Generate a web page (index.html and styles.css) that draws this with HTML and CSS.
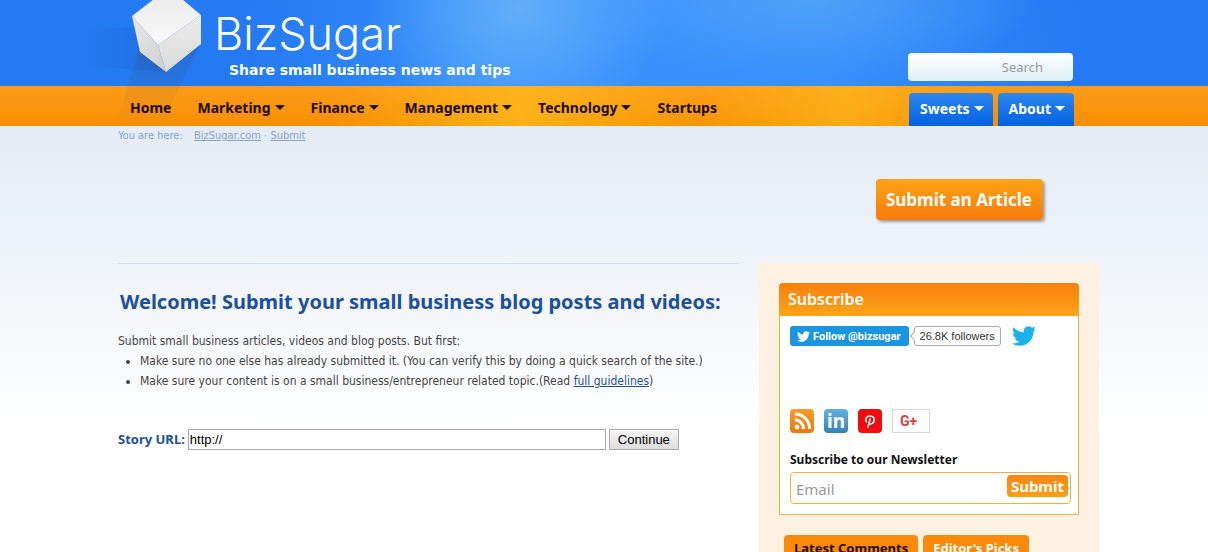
FILE: index.html
```
<!DOCTYPE html>
<html lang="en">
<head>
    <meta charset="UTF-8">
    <meta name="viewport" content="width=device-width, initial-scale=1.0">
    <title>BizSugar - Submit</title>
    <link rel="stylesheet" href="styles.css">
</head>
<body>
    <svg width="0" height="0" class="defs" aria-hidden="true">
        <symbol id="bird" viewBox="0 0 24 24">
            <path fill="currentColor" d="M23.953 4.57a10 10 0 01-2.825.775 4.958 4.958 0 002.163-2.723c-.951.555-2.005.959-3.127 1.184a4.92 4.92 0 00-8.384 4.482C7.69 8.095 4.067 6.13 1.64 3.162a4.822 4.822 0 00-.666 2.475c0 1.71.87 3.213 2.188 4.096a4.904 4.904 0 01-2.228-.616v.06a4.923 4.923 0 003.946 4.827 4.996 4.996 0 01-2.212.085 4.936 4.936 0 004.604 3.417 9.867 9.867 0 01-6.102 2.105c-.39 0-.779-.023-1.17-.067a13.995 13.995 0 007.557 2.209c9.053 0 13.998-7.496 13.998-13.985 0-.21 0-.42-.015-.63A9.935 9.935 0 0024 4.59z"/>
        </symbol>
    </svg>

    <header class="header">
        <div class="masthead">
            <div class="container masthead-inner">
                <svg class="cube" width="130" height="126" viewBox="85 0 130 126" aria-hidden="true">
                    <defs>
                        <linearGradient id="shade" x1="0" x2="1"><stop offset="0" stop-color="#1a5cc4" stop-opacity="0"/><stop offset="1" stop-color="#1a5cc4" stop-opacity=".4"/></linearGradient>
                        <linearGradient id="drop" x1="0" x2="0" y1="0" y2="1"><stop offset="0" stop-color="#333" stop-opacity=".2"/><stop offset="1" stop-color="#555" stop-opacity="0"/></linearGradient>
                        <linearGradient id="top" x1="0" x2="0" y1="1" y2="0"><stop offset="0" stop-color="#fafafa"/><stop offset="1" stop-color="#ececec"/></linearGradient>
                        <linearGradient id="left" x1="0" x2="1" y1="0" y2="1"><stop offset="0" stop-color="#e9e9e9"/><stop offset="1" stop-color="#cecece"/></linearGradient>
                        <linearGradient id="right" x1="0" x2="0" y1="0" y2="1"><stop offset="0" stop-color="#ececec"/><stop offset="1" stop-color="#dadada"/></linearGradient>
                    </defs>
                    <path fill="url(#shade)" d="M85 30l50-3 31 45-81-6z"/>
                    <path fill="url(#drop)" d="M140 46l61-4-29 60-4 22h-52z"/>
                    <path fill="url(#top)" d="M132 16l22-17h28l19 16-43 30z"/>
                    <path fill="url(#left)" d="M132 16l26 29 8 27-26-20z"/>
                    <path fill="url(#right)" d="M158 45l43-30v29l-35 28z"/>
                </svg>
                <div class="brand">
                    <a class="logo" href="#">BizSugar</a>
                    <p class="tagline">Share small business news and tips</p>
                </div>
                <form class="search">
                    <input type="text" class="search-input" placeholder="Search" aria-label="Search">
                </form>
            </div>
        </div>
        <nav class="navbar">
            <div class="container navbar-inner">
                <ul class="menu">
                    <li><a href="#">Home</a></li>
                    <li><a href="#" class="drop">Marketing</a></li>
                    <li><a href="#" class="drop">Finance</a></li>
                    <li><a href="#" class="drop">Management</a></li>
                    <li><a href="#" class="drop">Technology</a></li>
                    <li><a href="#">Startups</a></li>
                </ul>
                <ul class="menu-tabs">
                    <li><a href="#" class="drop">Sweets</a></li>
                    <li><a href="#" class="drop">About</a></li>
                </ul>
            </div>
        </nav>
    </header>

    <div class="container">
        <div class="breadcrumb">
            <span class="here">You are here:</span>
            <a href="#">BizSugar.com</a> &middot; <a href="#">Submit</a>
        </div>

        <div class="banner">
            <a class="submit-article" href="#">Submit an Article</a>
        </div>

        <div class="columns">
            <main class="content">
                <h1>Welcome! Submit your small business blog posts and videos:</h1>
                <p>Submit small business articles, videos and blog posts. But first:</p>
                <ul class="rules">
                    <li>Make sure no one else has already submitted it. (You can verify this by doing a quick search of the site.)</li>
                    <li>Make sure your content is on a small business/entrepreneur related topic.(Read <a href="#">full guidelines</a>)</li>
                </ul>
                <form class="story-form">
                    <label for="story-url">Story URL:</label>
                    <input type="text" id="story-url" value="http://">
                    <button type="submit">Continue</button>
                </form>
            </main>

            <aside class="sidebar">
                <section class="box">
                    <h2>Subscribe</h2>
                    <div class="box-body">
                        <div class="twitter">
                            <a class="follow" href="#"><svg width="13" height="13"><use href="#bird"/></svg>Follow @bizsugar</a>
                            <a class="count" href="#">26.8K followers</a>
                            <a class="bird" href="#" aria-label="Twitter"><svg width="24" height="24"><use href="#bird"/></svg></a>
                        </div>
                        <div class="social">
                            <a href="#" class="icon rss" aria-label="RSS">
                                <svg width="24" height="24" viewBox="0 0 24 24" fill="none" stroke="#fff" stroke-width="3"><circle cx="7" cy="18" r="2.4" fill="#fff" stroke="none"/><path d="M5 11a8.500 8.500 0 0 1 8.500 9M5 5a14.500 14.500 0 0 1 14.500 15"/></svg>
                            </a>
                            <a href="#" class="icon linkedin">in</a>
                            <a href="#" class="icon pinterest" aria-label="Pinterest">
                                <svg width="24" height="24" viewBox="0 0 24 24" fill="none" stroke="#fff" stroke-width="1.600" stroke-linecap="round"><path d="M8.600 13C6.500 10.500 8 7 12 7c3 0 4.700 2 4.200 4.500-.5 3-3.700 4.500-5.200 2.500M12.200 9.800L10 18"/></svg>
                            </a>
                            <a href="#" class="gplus">G<span>+</span></a>
                        </div>
                        <form class="newsletter">
                            <label for="email">Subscribe to our Newsletter</label>
                            <div class="newsletter-row">
                                <input type="email" id="email" placeholder="Email">
                                <button type="submit">Submit</button>
                            </div>
                        </form>
                    </div>
                </section>
                <div class="tabs">
                    <button type="button" class="active">Latest Comments</button>
                    <button type="button">Editor's Picks</button>
                </div>
            </aside>
        </div>
    </div>
</body>
</html>
```

FILE: styles.css
```
* {
    box-sizing: border-box;
}
html {
    height: 100%;
    overflow: hidden;
}
body {
    margin: 0;
    font-family: "Noto Sans", Tahoma, sans-serif;
    font-size: 12px;
    color: #444;
    background: #fff linear-gradient(#e5ecf6 126px, #eff4f9 260px, #fff 430px) no-repeat;
}
ul {
    list-style: none;
    margin: 0;
    padding: 0;
}
.defs {
    position: absolute;
}
.container {
    max-width: 972px;
    margin: 0 auto;
}

/* header */
.masthead {
    background:
        radial-gradient(ellipse 150px 130px at 43% 10%, #62aef9, rgba(98, 174, 249, 0)),
        radial-gradient(ellipse 230px 80px at 67% 0, rgba(84, 164, 246, 0.8), rgba(84, 164, 246, 0)),
        radial-gradient(ellipse 420px 260px at 55% 60%, #3790fc 40%, rgba(55, 144, 252, 0)),
        #247af3;
}
.masthead-inner {
    position: relative;
    display: flex;
    justify-content: space-between;
    height: 86px;
}
.cube {
    position: absolute;
    left: -33px;
    top: 0;
}
.brand {
    padding: 7px 0 0 96px;
}
.logo {
    display: block;
    font-family: Inter, sans-serif;
    font-weight: 300;
    font-size: 45px;
    line-height: 54px;
    color: #fff;
    text-decoration: none;
}
.tagline {
    margin: 0;
    padding-left: 15px;
    font-family: "DejaVu Sans", Verdana, sans-serif;
    font-size: 14px;
    line-height: 18px;
    font-weight: bold;
    color: #fff;
}
.search {
    padding: 53px 17px 0 0;
}
.search-input {
    width: 165px;
    height: 28px;
    padding: 0 30px;
    border: 0;
    border-radius: 4px;
    background: linear-gradient(#fff, #deeff3);
    font-family: inherit;
    font-size: 13px;
    text-align: right;
}
::placeholder {
    color: #999;
    opacity: 1;
}
.navbar {
    background:
        linear-gradient(90deg, rgba(252, 190, 30, 0) 28%, rgba(252, 190, 30, 0.7) 43%, rgba(252, 190, 30, 0.1) 58%, rgba(252, 190, 30, 0.6) 70%, rgba(252, 190, 30, 0) 82%),
        linear-gradient(#fb9c1a, #f98f00);
}
.navbar-inner {
    position: relative;
    display: flex;
    justify-content: space-between;
    height: 40px;
}
.menu {
    display: flex;
    gap: 26px;
    padding-left: 12px;
}
.menu a,
.menu-tabs a {
    display: flex;
    align-items: center;
    gap: 4px;
    font-size: 14px;
    font-weight: bold;
    text-decoration: none;
}
.menu a {
    line-height: 43px;
    color: #1d0c00;
}
.drop::after {
    content: "";
    border: 5px solid transparent;
    border-top-color: currentColor;
    border-bottom: 0;
}
.menu-tabs {
    display: flex;
    gap: 5px;
    padding: 7px 16px 0 0;
}
.menu-tabs a {
    height: 33px;
    padding: 0 9px 3px 11px;
    border-radius: 4px 4px 0 0;
    background: linear-gradient(#2d86ef, #0262e2);
    color: #fff;
}

.breadcrumb {
    padding-top: 2px;
    font-family: "DejaVu Sans Condensed", Tahoma, sans-serif;
    font-size: 11px;
    line-height: 16px;
    color: #84a3d0;
}
.breadcrumb a {
    color: #84a3d0;
}
.here {
    margin-right: 8px;
}
.banner {
    display: flex;
    justify-content: flex-end;
    height: 119px;
    padding: 35px 47px 0 0;
}
.submit-article {
    height: 41px;
    padding: 0 11px 0 10px;
    border-radius: 4px;
    background: linear-gradient(#fda315, #f87a0d);
    box-shadow: 2px 2px 3px rgba(0, 0, 0, 0.35);
    font-size: 17px;
    font-weight: bold;
    line-height: 41px;
    color: #fff;
    text-decoration: none;
}

/* main columns */
.columns {
    display: grid;
    grid-template-columns: 1fr 340px;
    gap: 20px;
    margin-right: -9px;
}
.content {
    border-top: 1px solid #d5dfe8;
}
h1 {
    margin: 22px 2px 13px;
    font-size: 20px;
    line-height: 32px;
    color: #1c4f9c;
    white-space: nowrap;
}
.content p,
.rules {
    margin: 0;
    font-family: "DejaVu Sans Condensed", Tahoma, sans-serif;
    font-size: 12px;
    line-height: 20px;
}
.rules {
    list-style: disc;
    padding-left: 22px;
    white-space: nowrap;
}
.rules a {
    color: #1c4f9c;
}
.story-form {
    display: flex;
    align-items: center;
    gap: 3px;
    margin-top: 38px;
}
.story-form label {
    font-size: 13px;
    font-weight: bold;
    line-height: 21px;
    color: #1c4f9c;
}
.story-form input {
    width: 418px;
    height: 21px;
    padding: 1px;
    border: 1px solid #a9a9a9;
    font: 13px "Liberation Sans", Arial, sans-serif;
}
.story-form button {
    width: 70px;
    height: 21px;
    padding: 0;
    border: 1px solid #a9a9a9;
    background: linear-gradient(#f6f6f6, #dedede);
    font: 13px "Liberation Sans", Arial, sans-serif;
}

/* sidebar */
.sidebar {
    padding: 20px 20px 10px;
    background: #fdf2e1;
}
.box {
    border: 1px solid #eeb13f;
    border-radius: 4px 4px 0 0;
    background: #fff;
}
h2 {
    margin: -1px -1px 0;
    padding-left: 9px;
    border-radius: 4px 4px 0 0;
    background: linear-gradient(#f97f0c, #fda518);
    font-size: 16px;
    font-weight: 600;
    line-height: 33px;
    color: #fff;
}
.box-body {
    padding: 10px 7px 10px 10px;
}
.twitter {
    display: flex;
    height: 20px;
    font: 11px "Liberation Sans", Arial, sans-serif;
}
.follow,
.count {
    display: flex;
    align-items: center;
    border-radius: 3px;
    text-decoration: none;
}
.follow {
    gap: 3px;
    padding: 0 8px 0 7px;
    background: #1b95e0;
    color: #fff;
    font-family: Roboto, sans-serif;
    font-weight: bold;
}
.count {
    position: relative;
    margin-left: 5px;
    padding: 0 5px;
    border: 1px solid #aaa;
    background: #fff;
    color: #333;
}
.count::before {
    content: "";
    position: absolute;
    left: -4px;
    top: 6px;
    width: 5px;
    height: 5px;
    border: solid #aaa;
    border-width: 0 0 1px 1px;
    background: #fff;
    transform: rotate(45deg);
}
.bird {
    margin: -2px 0 0 11px;
    color: #1bb1ea;
}
.social {
    display: flex;
    gap: 10px;
    margin-top: 63px;
}
.social a {
    text-decoration: none;
}
.icon {
    width: 24px;
    height: 24px;
    border-radius: 4px;
    color: #fff;
}
.rss {
    background: linear-gradient(#fb9a2b, #ea7a10);
}
.linkedin {
    background: linear-gradient(#62b0dc, #3583ba);
    font: bold 19px/25px "Noto Sans", sans-serif;
    text-align: center;
}
.pinterest {
    background: #f00d12;
}
.gplus {
    width: 38px;
    height: 24px;
    padding-left: 7px;
    border: 1px solid #d8d8d8;
    font: bold 14px/22px Roboto, sans-serif;
    color: #dc4040;
}
.newsletter {
    margin-top: 18px;
}
.newsletter label {
    display: block;
    line-height: 18px;
    font-weight: bold;
    color: #111;
}
.newsletter-row {
    display: flex;
    height: 32px;
    margin-top: 3px;
    padding: 2px 2px 0 5px;
    border: 1px solid #eeb13f;
    border-radius: 4px;
}
.newsletter input {
    flex: 1;
    height: 27px;
    min-width: 0;
    padding: 0;
    border: 0;
    background: none;
    font: 15px "Noto Sans", sans-serif;
}
.newsletter button {
    height: 22px;
    padding: 0 4px;
    border: 0;
    border-radius: 4px;
    background: linear-gradient(#f8850f, #fda015);
    font: bold 15px/22px "Noto Sans", sans-serif;
    color: #fff;
}
.tabs {
    display: flex;
    gap: 5px;
    padding: 20px 5px 0;
}
.tabs button {
    height: 26px;
    padding: 0 10px;
    border: 0;
    border-radius: 4px 4px 0 0;
    background: #fb8a0b;
    font: bold 13px "Noto Sans", sans-serif;
    color: #fff;
}
.tabs .active {
    color: #1d0c00;
}
```
